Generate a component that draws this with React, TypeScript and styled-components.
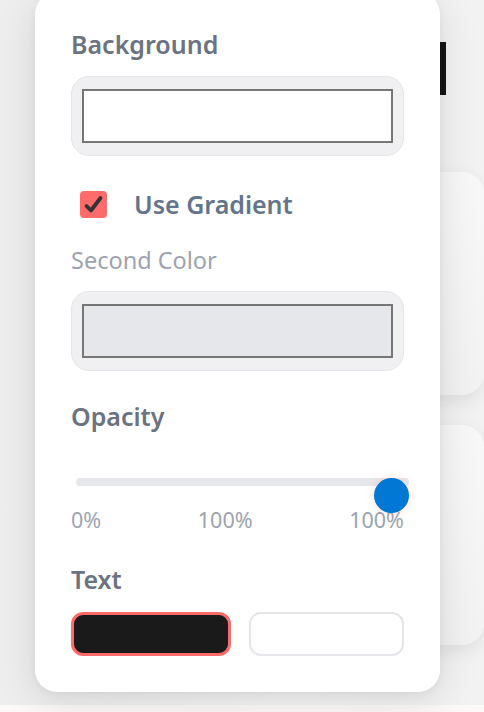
import styled, { createGlobalStyle } from "styled-components";

const GlobalStyle = createGlobalStyle`
	html,
	body {
		margin: 0;
		padding: 0;
	}
	body {
		font-family: "Noto Sans", "Open Sans", sans-serif;
		background: #f1f1f2;
	}
`;

const Stage = styled.div`
	position: relative;
	width: 484px;
	height: 712px;
	overflow: hidden;
	background: linear-gradient(90deg, #eeeeef 0%, #f6f6f7 60%, #f2f2f3 100%);
`;

const Backdrop = styled.div`
	display: flex;
	flex-direction: column;
	margin-left: 300px;
	width: 184px;
	padding-top: 42px;
`;

const DarkBlock = styled.div`
	width: 146px;
	height: 53px;
	background: #151515;
	margin-bottom: 77px;
`;

const GhostCard = styled.div<{ $height: number }>`
	height: ${(p) => p.$height}px;
	border-radius: 22px;
	background: linear-gradient(180deg, #f8f8f9, #f2f2f3);
	box-shadow: 0 6px 18px rgba(0, 0, 0, 0.08);
	margin-bottom: 30px;
`;

const BottomStrip = styled.div`
	position: absolute;
	left: 0;
	right: 0;
	bottom: 0;
	height: 7px;
	background: #fff8f8;
`;

const Popover = styled.div`
	position: absolute;
	left: 35px;
	top: -8px;
	width: 405px;
	height: 700px;
	box-sizing: border-box;
	padding: 35px 36px 0 36px;
	background: #ffffff;
	border-radius: 22px;
	box-shadow: 0 10px 40px rgba(0, 0, 0, 0.12), 0 2px 8px rgba(0, 0, 0, 0.05);
	display: flex;
	flex-direction: column;
`;

const Label = styled.div<{ $muted?: boolean }>`
	font-size: ${(p) => (p.$muted ? "23.5px" : "25px")};
	font-weight: ${(p) => (p.$muted ? 400 : 600)};
	color: ${(p) => (p.$muted ? "#9ca3af" : "#6b7280")};
	line-height: ${(p) => (p.$muted ? "32px" : "34px")};
`;

const SwatchWell = styled.div`
	margin-top: 15px;
	height: 80px;
	box-sizing: border-box;
	padding: 12px 10px;
	border-radius: 18px;
	background: #f0f0f2;
	border: 1px solid #e6e6ea;
`;

const Swatch = styled.div<{ $color: string }>`
	height: 100%;
	box-sizing: border-box;
	border: 2px solid #767676;
	background: ${(p) => p.$color};
`;

const CheckRow = styled.label`
	display: flex;
	align-items: center;
	gap: 27px;
	margin: 31px 0 0 9px;
	font-size: 25px;
	font-weight: 600;
	color: #64748b;
	line-height: 34px;
`;

const CheckBox = styled.span`
	width: 27px;
	height: 27px;
	border-radius: 4px;
	background: #ff6b6b;
	display: flex;
	align-items: center;
	justify-content: center;
`;

const Section = styled.div<{ $gap: number }>`
	margin-top: ${(p) => p.$gap}px;
`;

const Track = styled.div`
	position: relative;
	margin: 45px 0 0 5px;
	width: 333px;
	height: 8px;
	border-radius: 4px;
	background: #e5e7eb;
`;

const Thumb = styled.div`
	position: absolute;
	top: 0;
	right: 0;
	width: 35px;
	height: 35px;
	border-radius: 50%;
	background: #0078d4;
	box-shadow: 0 0 8px rgba(255, 120, 120, 0.25);
`;

const Ticks = styled.div`
	display: flex;
	justify-content: space-between;
	margin-top: 20px;
	font-size: 21.5px;
	color: #9ca3af;
	line-height: 28px;
`;

const ButtonRow = styled.div`
	display: grid;
	grid-template-columns: 160px 155px;
	gap: 18px;
	margin-top: 16px;
`;

const ColorButton = styled.button<{ $fill: string; $active?: boolean }>`
	height: 44px;
	border-radius: 12px;
	background: ${(p) => p.$fill};
	border: ${(p) => (p.$active ? "3px solid #ff6b6b" : "2px solid #e6e6ea")};
	padding: 0;
`;

export default function App() {
	return (
		<Stage>
			<GlobalStyle />
			<Backdrop>
				<DarkBlock />
				<GhostCard $height={223} />
				<GhostCard $height={220} />
			</Backdrop>
			<BottomStrip />
			<Popover>
				<Label>Background</Label>
				<SwatchWell>
					<Swatch $color="#ffffff" />
				</SwatchWell>

				<CheckRow>
					<CheckBox>
						<svg width="21" height="21" viewBox="0 0 21 21">
							<path d="M3.5 12 L8 16.5 L17.5 4" fill="none" stroke="#333" strokeWidth="3.8" strokeLinecap="round" strokeLinejoin="round" />
						</svg>
					</CheckBox>
					Use Gradient
				</CheckRow>

				<Section $gap={23}>
					<Label $muted>Second Color</Label>
					<SwatchWell>
						<Swatch $color="#e5e7eb" />
					</SwatchWell>
				</Section>

				<Section $gap={28}>
					<Label>Opacity</Label>
					<Track>
						<Thumb />
					</Track>
					<Ticks>
						<span>0%</span>
						<span>100%</span>
						<span>100%</span>
					</Ticks>
				</Section>

				<Section $gap={28}>
					<Label>Text</Label>
					<ButtonRow>
						<ColorButton $fill="#1a1a1a" $active />
						<ColorButton $fill="#ffffff" />
					</ButtonRow>
				</Section>
			</Popover>
		</Stage>
	);
}
